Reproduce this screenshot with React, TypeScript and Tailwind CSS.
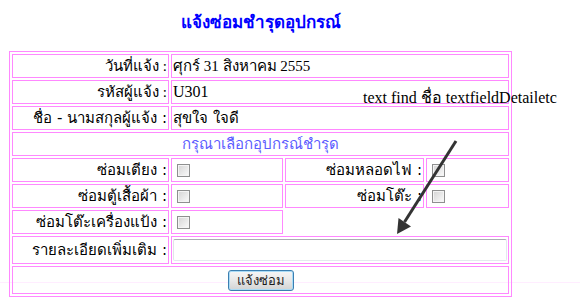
import React from "react";

const cell = "border border-[#ff88ff] p-[1px] h-[24px] leading-[20px]";
const sans = "font-['Tahoma','DejaVu_Sans',sans-serif]";
const serif = "font-['Liberation_Serif','Times_New_Roman',serif]";

function Box() {
  return (
    <input
      type="checkbox"
      className="appearance-none block w-[13px] h-[13px] ml-[4px] border border-[#8e8f8f] bg-linear-to-br from-[#d4d4d4] to-[#fbfbfb] shadow-[inset_0_0_0_1px_#f4f4f4]"
    />
  );
}

function Label({ children, font = sans }: { children: React.ReactNode; font?: string }) {
  return (
    <td className={`${cell} ${font} text-right text-[15px] text-black whitespace-nowrap`}>
      {children}
    </td>
  );
}

export default function App() {
  return (
    <div className="relative w-[580px] h-[306px] bg-white overflow-hidden">
      {/* faint line from the screenshot */}
      <div className="absolute left-0 right-0 top-[282px] h-px bg-[#ff88ff]/15" />

      <div className="relative ml-[9px] w-[503px] pt-[10px]">
        <h1 className={`h-[41px] text-center text-[17px] leading-[24px] font-bold text-[#0000ff] ${sans}`}>
          แจ้งซ่อมชำรุดอุปกรณ์
        </h1>

        <table className="table-fixed w-[503px] border-separate border-spacing-[2px] border border-[#ff88ff]">
          <colgroup>
            <col className="w-[157px]" />
            <col className="w-[112px]" />
            <col className="w-[139px]" />
            <col />
          </colgroup>
          <tbody>
            <tr>
              <Label font={serif}>วันที่แจ้ง :</Label>
              <td colSpan={3} className={`${cell} ${serif} text-[15px]`}>
                ศุกร์ 31 สิงหาคม 2555
              </td>
            </tr>
            <tr>
              <Label font={serif}>รหัสผู้แจ้ง :</Label>
              <td colSpan={3} className={`${cell} ${serif} text-[16px]`}>
                U301
              </td>
            </tr>
            <tr>
              <Label>ชื่อ - นามสกุลผู้แจ้ง :</Label>
              <td colSpan={3} className={`${cell} ${sans} text-[15px]`}>
                สุขใจ ใจดี
              </td>
            </tr>
            <tr>
              <td colSpan={4} className={`${cell} ${sans} text-center text-[15px] text-[#5c5cff]`}>
                กรุณาเลือกอุปกรณ์ชำรุด
              </td>
            </tr>
            <tr>
              <Label>ซ่อมเตียง :</Label>
              <td className={cell}><Box /></td>
              <Label>ซ่อมหลอดไฟ :</Label>
              <td className={cell}><Box /></td>
            </tr>
            <tr>
              <Label>ซ่อมตู้เสื้อผ้า :</Label>
              <td className={cell}><Box /></td>
              <Label>ซ่อมโต๊ะ :</Label>
              <td className={cell}><Box /></td>
            </tr>
            <tr>
              <Label>ซ่อมโต๊ะเครื่องแป้ง :</Label>
              <td className={cell}><Box /></td>
            </tr>
            <tr>
              <td className={`${cell} h-[28px] ${sans} text-right text-[15px] whitespace-nowrap`}>
                รายละเอียดเพิ่มเติม :
              </td>
              <td colSpan={3} className={`${cell} h-[28px]`}>
                <input
                  type="text"
                  className="block w-[334px] h-[22px] rounded-[2px] border border-[#e3e9ef] border-t-[#abadb3] border-l-[#e2e3ea] bg-white outline-none"
                />
              </td>
            </tr>
            <tr>
              <td colSpan={4} className={`${cell} h-[28px] text-center`}>
                <button className={`block mx-auto w-[66px] h-[21px] rounded-[3px] border border-[#3c7fb1] bg-linear-to-b from-[#f6f6f6] via-[#e8e8e8] to-[#d3d3d3] shadow-[inset_0_0_0_1px_#a9dbf6] text-[13px] leading-[17px] text-[#1a1a1a] ${sans}`}>
                  แจ้งซ่อม
                </button>
              </td>
            </tr>
          </tbody>
        </table>
      </div>

      {/* annotation */}
      <div className={`absolute left-[363px] top-[89px] text-[16px] leading-[18px] text-black whitespace-nowrap ${serif}`}>
        text find ชื่อ textfieldDetailetc
      </div>
      <svg className="absolute left-[390px] top-[135px]" width="75" height="105" viewBox="0 0 75 105">
        <line x1="66" y1="6" x2="14.5" y2="87" stroke="#333" strokeWidth="3" />
        <polygon points="7,99 21,91.5 8.5,83" fill="#333" />
      </svg>
    </div>
  );
}
